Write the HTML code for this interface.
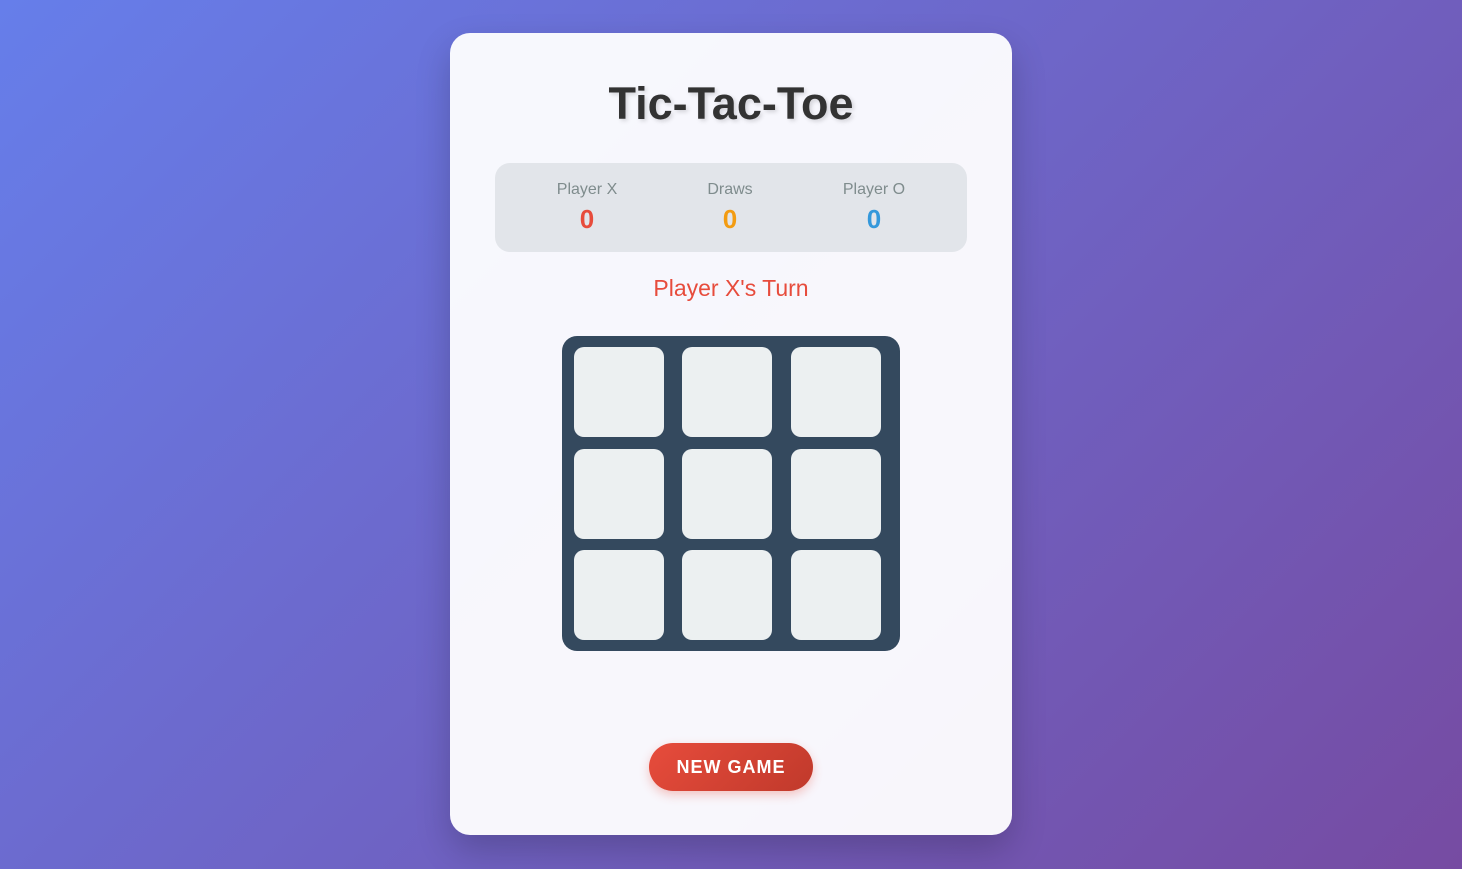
<!DOCTYPE html>
<html><head><meta charset="utf-8"><style>
*{margin:0;padding:0;box-sizing:border-box}
html,body{width:1462px;height:869px;overflow:hidden}
body{background:linear-gradient(135deg,#667eea 0%,#764ba2 100%);font-family:"Liberation Sans",Arial,sans-serif;position:relative}
.card{position:absolute;left:450px;top:33px;width:562px;height:802px;background:rgba(255,255,255,0.95);border-radius:20px;box-shadow:0 15px 35px rgba(0,0,0,0.2)}
h1{position:absolute;left:0;right:0;top:44px;text-align:center;font-size:45px;font-weight:bold;color:#333;text-shadow:2px 2px 4px rgba(0,0,0,0.15);line-height:54px}
.score{position:absolute;left:45px;top:130px;width:472px;height:89px;background:#e2e5ea;border-radius:15px}
.col{position:absolute;top:17px;width:140px;text-align:center}
.lab{font-size:16px;color:#7f8c8d;line-height:20px}
.num{font-size:26px;font-weight:bold;line-height:32px;margin-top:3px}
.turn{position:absolute;left:0;right:0;top:240px;text-align:center;font-size:23px;color:#e74c3c;line-height:30px}
.board{position:absolute;left:112px;top:303px;width:338px;height:315px;background:#34495e;border-radius:15px}
.cell{position:absolute;width:90px;height:90px;background:#ecf0f1;border-radius:10px}
.btn{position:absolute;left:199px;top:710px;width:164px;height:48px;border-radius:24px;background:linear-gradient(135deg,#e74c3c,#c0392b);color:#fff;font-weight:bold;font-size:18px;letter-spacing:1px;text-align:center;line-height:48px;box-shadow:0 4px 10px rgba(231,76,60,0.3)}
</style></head><body>
<div class="card">
<h1>Tic-Tac-Toe</h1>
<div class="score">
<div class="col" style="left:22px"><div class="lab">Player X</div><div class="num" style="color:#e74c3c">0</div></div>
<div class="col" style="left:165px"><div class="lab">Draws</div><div class="num" style="color:#f39c12">0</div></div>
<div class="col" style="left:309px"><div class="lab">Player O</div><div class="num" style="color:#3498db">0</div></div>
</div>
<div class="turn">Player X's Turn</div>
<div class="board">
<div class="cell" style="left:12px;top:11px"></div>
<div class="cell" style="left:120px;top:11px"></div>
<div class="cell" style="left:229px;top:11px"></div>
<div class="cell" style="left:12px;top:113px"></div>
<div class="cell" style="left:120px;top:113px"></div>
<div class="cell" style="left:229px;top:113px"></div>
<div class="cell" style="left:12px;top:214px"></div>
<div class="cell" style="left:120px;top:214px"></div>
<div class="cell" style="left:229px;top:214px"></div>
</div>
<div class="btn">NEW GAME</div>
</div>
</body></html>
